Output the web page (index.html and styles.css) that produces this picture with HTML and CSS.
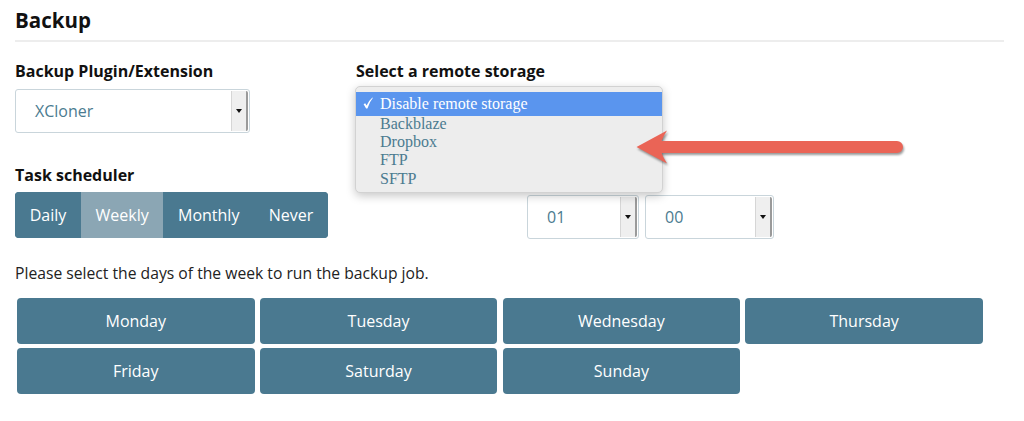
FILE: index.html
```html
<!DOCTYPE html>
<html>
<head>
<meta charset="utf-8">
<link rel="stylesheet" href="styles.css">
</head>
<body>
<div class="page">
  <h1 class="title">Backup</h1>

  <div class="row row-top">
    <div class="col col-left">
      <div class="label">Backup Plugin/Extension</div>
      <div class="select select-plugin">
        <span class="select-value">XCloner</span>
        <span class="select-btn"><span class="caret"></span></span>
      </div>
    </div>
    <div class="col col-right">
      <div class="label">Select a remote storage</div>
    </div>
  </div>

  <div class="row row-sched">
    <div class="col col-left">
      <div class="label">Task scheduler</div>
      <div class="btn-group">
        <span class="seg">Daily</span>
        <span class="seg seg-active">Weekly</span>
        <span class="seg">Monthly</span>
        <span class="seg">Never</span>
      </div>
    </div>
    <div class="col col-time">
      <div class="select select-hour">
        <span class="select-value">01</span>
        <span class="select-btn"><span class="caret"></span></span>
      </div>
      <div class="select select-min">
        <span class="select-value">00</span>
        <span class="select-btn"><span class="caret"></span></span>
      </div>
    </div>
  </div>

  <p class="hint">Please select the days of the week to run the backup job.</p>

  <div class="days">
    <span class="day">Monday</span>
    <span class="day">Tuesday</span>
    <span class="day">Wednesday</span>
    <span class="day">Thursday</span>
    <span class="day">Friday</span>
    <span class="day">Saturday</span>
    <span class="day">Sunday</span>
  </div>

  <div class="menu">
    <div class="menu-item menu-selected"><svg class="check" viewBox="0 0 10 12" width="10" height="12" xmlns="http://www.w3.org/2000/svg"><path d="M0.6,7.2 L2.2,6.2 L3.6,8.6 Q5.6,3.6 9.4,0.4 L9.8,0.9 Q6.6,4.6 4.4,11.4 L3.1,11.4 Z" fill="#ffffff"/></svg>Disable remote storage</div>
    <div class="menu-item">Backblaze</div>
    <div class="menu-item">Dropbox</div>
    <div class="menu-item">FTP</div>
    <div class="menu-item">SFTP</div>
  </div>

  <svg class="pointer" viewBox="626 122 290 52" width="290" height="52" xmlns="http://www.w3.org/2000/svg">
    <path d="M636.5,147 L667,130.5 Q663.5,136 661.5,141 L897,141 A6,6 0 0 1 897,153 L661.5,153 Q663.5,158 667,163.5 Z" fill="#ea6456"/>
  </svg>
</div>
</body>
</html>
```

FILE: styles.css
```css
* { box-sizing: border-box; }

html, body {
  margin: 0;
  padding: 0;
  background: #ffffff;
}

body {
  font-family: "Open Sans", "Liberation Sans", sans-serif;
  color: #111111;
  width: 1024px;
  height: 421px;
  overflow: hidden;
}

.page {
  position: relative;
  padding: 6px 20px 0 15px;
}

.title {
  margin: 0;
  font-size: 20.5px;
  line-height: 28px;
  font-weight: 700;
  padding-bottom: 6px;
  border-bottom: 2px solid #ededed;
  width: 989px;
}

.row {
  display: flex;
}

.row-top {
  margin-top: 19px;
}

.col-left {
  width: 341px;
  flex: none;
}

.label {
  font-size: 16px;
  line-height: 20px;
  font-weight: 700;
  color: #111111;
}

.select {
  display: flex;
  align-items: stretch;
  height: 44px;
  border: 1px solid #c9d5db;
  border-radius: 3px;
  background: #ffffff;
  padding: 1px 1px 1px 0;
}

.select-value {
  flex: 1;
  display: flex;
  align-items: center;
  padding-left: 19px;
  font-size: 16px;
  color: #4b7b90;
}

.select-btn {
  width: 17px;
  flex: none;
  display: flex;
  align-items: center;
  justify-content: center;
  background: #efefef;
  border-left: 1px solid #d6d6d6;
  border-right: 2px solid #9a9a9a;
  border-radius: 0 2px 2px 0;
}

.caret {
  width: 0;
  height: 0;
  border-left: 3.5px solid transparent;
  border-right: 3.5px solid transparent;
  border-top: 4px solid #111111;
}

.select-plugin {
  margin-top: 8px;
  width: 235px;
}

.row-sched {
  margin-top: 32px;
}

.btn-group {
  margin-top: 7px;
  display: inline-flex;
  height: 46px;
  border-radius: 4px;
  overflow: hidden;
  background: #4a7990;
}

.seg {
  display: flex;
  align-items: center;
  padding: 0 14.65px;
  font-size: 16px;
  color: #ffffff;
  background: #4a7990;
}

.seg-active {
  background: #8ba6b4;
}

.col-time {
  display: flex;
  gap: 6px;
  align-self: flex-end;
  padding-left: 171px;
  margin-bottom: -1px;
}

.select-hour { width: 112px; }
.select-min { width: 129px; }

.hint {
  margin: 25px 0 0 0;
  font-size: 15.7px;
  line-height: 20px;
  color: #222222;
}

.days {
  margin: 15px 0 0 2px;
  display: grid;
  grid-template-columns: repeat(4, 237.5px);
  column-gap: 5.3px;
  row-gap: 4px;
}

.day {
  height: 46px;
  display: flex;
  align-items: center;
  justify-content: center;
  background: #4a7990;
  color: #ffffff;
  font-size: 16px;
  border-radius: 4px;
}

.menu {
  position: absolute;
  left: 355px;
  top: 86px;
  width: 308px;
  height: 107px;
  background: #ededed;
  border: 1px solid #d2d2d2;
  border-radius: 5px;
  box-shadow: 0 3px 10px rgba(0, 0, 0, 0.22);
  padding-top: 5px;
  font-family: "Liberation Serif", "Times New Roman", serif;
  font-size: 16px;
  color: #4b7b90;
}

.menu-item {
  height: 18.4px;
  line-height: 18.4px;
  padding-left: 24px;
  white-space: nowrap;
}

.menu-selected {
  display: flex;
  align-items: center;
  height: 23.5px;
  line-height: 23.5px;
  background: #5a95ee;
  color: #ffffff;
  padding-left: 7px;
  margin-bottom: -1px;
}

.check {
  flex: none;
  margin-right: 7px;
  margin-top: -1px;
}

.pointer {
  position: absolute;
  left: 626px;
  top: 122px;
  filter: drop-shadow(1px 2px 1px rgba(0, 0, 0, 0.4));
}
```
